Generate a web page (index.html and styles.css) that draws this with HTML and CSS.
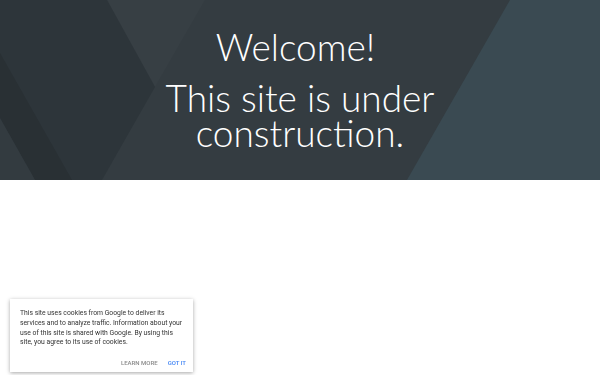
FILE: index.html
```html
<!DOCTYPE html>
<html lang="en">
<head>
  <meta charset="UTF-8">
  <meta name="viewport" content="width=device-width, initial-scale=1.0">
  <title>Welcome</title>
  <link rel="stylesheet" href="styles.css">
</head>
<body>
  <header class="hero">
    <svg class="hero-bg" viewBox="0 0 600 180" preserveAspectRatio="none" aria-hidden="true">
      <rect width="600" height="180" fill="#343c41"/>
      <polygon points="510,0 600,0 600,180 407,180" fill="#3a4a52"/>
      <polygon points="107,0 205,0 155,87" fill="#373f44"/>
      <polygon points="0,0 107,0 155,87 102,180 0,180" fill="#2d353a"/>
      <polygon points="0,53 72,180 35,180 0,118" fill="#293034"/>
      <polygon points="0,118 35,180 0,180" fill="#333b40"/>
    </svg>
    <div class="hero-text">
      <h1>Welcome!</h1>
      <h2>This site is under<br>construction.</h2>
    </div>
  </header>

  <main class="content"></main>

  <div class="cookie">
    <p>This site uses cookies from Google to deliver its services and to analyze traffic. Information about your use of this site is shared with Google. By using this site, you agree to its use of cookies.</p>
    <div class="cookie-actions">
      <button class="learn">Learn more</button>
      <button class="got">Got it</button>
    </div>
  </div>
</body>
</html>
```

FILE: styles.css
```css
body {
  margin: 0;
  font-family: 'Lato', sans-serif;
  background: #fff;
}
.hero {
  position: relative;
  height: 180px;
  overflow: hidden;
}
.hero-bg {
  position: absolute;
  top: 0;
  left: 0;
  width: 100%;
  height: 100%;
}
.hero-text {
  position: relative;
  text-align: center;
  color: #fff;
  padding-top: 28px;
}
h1, h2 {
  margin: 0;
  font-weight: 300;
  font-size: 37px;
  line-height: 1;
}
h1 {
  padding-right: 9px;
}
h2 {
  margin-top: 15px;
  line-height: 35px;
}
.cookie {
  position: fixed;
  left: 10px;
  bottom: 3px;
  width: 183px;
  box-sizing: border-box;
  padding: 10px 7px 6px 10px;
  background: #fff;
  box-shadow: 0 1px 4px rgba(0, 0, 0, 0.35);
  font-family: 'Roboto', sans-serif;
  font-size: 6.8px;
  color: #333;
}
.cookie p {
  margin: 0;
  line-height: 9.7px;
}
.cookie-actions {
  display: flex;
  justify-content: flex-end;
  gap: 10px;
  margin-top: 11px;
}
.cookie-actions button {
  border: none;
  background: none;
  padding: 0;
  font-family: 'Roboto', sans-serif;
  font-size: 6px;
  font-weight: 500;
  text-transform: uppercase;
}
.learn {
  color: #8a8a8a;
}
.got {
  color: #4285f4;
}
```
